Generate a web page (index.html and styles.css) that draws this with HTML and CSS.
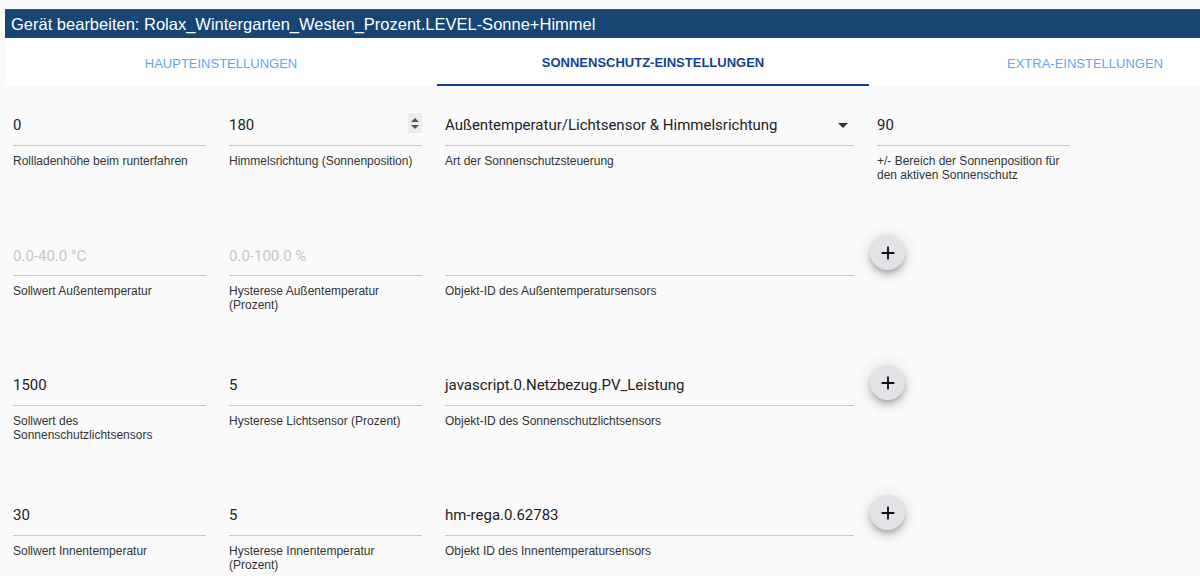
FILE: index.html
```html
<!DOCTYPE html>
<html lang="de">
<head>
<meta charset="utf-8">
<title>Gerät bearbeiten</title>
<link rel="stylesheet" href="styles.css">
</head>
<body>
<div class="dialog">
  <div class="title">Gerät bearbeiten: Rolax_Wintergarten_Westen_Prozent.LEVEL-Sonne+Himmel</div>
  <div class="tabs">
    <div class="tab">HAUPTEINSTELLUNGEN</div>
    <div class="tab active">SONNENSCHUTZ-EINSTELLUNGEN</div>
    <div class="tab">EXTRA-EINSTELLUNGEN</div>
  </div>
  <div class="content">
    <div class="row">
      <div class="field">
        <div class="input">0</div>
        <div class="label">Rollladenhöhe beim runterfahren</div>
      </div>
      <div class="field">
        <div class="input">180<span class="spinner"><span class="up"></span><span class="down"></span></span></div>
        <div class="label">Himmelsrichtung (Sonnenposition)</div>
      </div>
      <div class="field wide">
        <div class="input">Außentemperatur/Lichtsensor &amp; Himmelsrichtung<span class="caret"></span></div>
        <div class="label">Art der Sonnenschutzsteuerung</div>
      </div>
      <div class="field">
        <div class="input">90</div>
        <div class="label">+/- Bereich der Sonnenposition für den aktiven Sonnenschutz</div>
      </div>
    </div>
    <div class="row">
      <div class="field">
        <div class="input placeholder">0.0-40.0 °C</div>
        <div class="label">Sollwert Außentemperatur</div>
      </div>
      <div class="field">
        <div class="input placeholder">0.0-100.0 %</div>
        <div class="label">Hysterese Außentemperatur (Prozent)</div>
      </div>
      <div class="field wide">
        <div class="input"></div>
        <div class="label">Objekt-ID des Außentemperatursensors</div>
      </div>
      <div class="fab-cell"><button class="fab"><svg viewBox="0 0 24 24" width="22" height="22"><path d="M19 13h-6v6h-2v-6H5v-2h6V5h2v6h6v2z" fill="#111"/></svg></button></div>
    </div>
    <div class="row">
      <div class="field">
        <div class="input">1500</div>
        <div class="label">Sollwert des Sonnenschutzlichtsensors</div>
      </div>
      <div class="field">
        <div class="input">5</div>
        <div class="label">Hysterese Lichtsensor (Prozent)</div>
      </div>
      <div class="field wide">
        <div class="input">javascript.0.Netzbezug.PV_Leistung</div>
        <div class="label">Objekt-ID des Sonnenschutzlichtsensors</div>
      </div>
      <div class="fab-cell"><button class="fab"><svg viewBox="0 0 24 24" width="22" height="22"><path d="M19 13h-6v6h-2v-6H5v-2h6V5h2v6h6v2z" fill="#111"/></svg></button></div>
    </div>
    <div class="row">
      <div class="field">
        <div class="input">30</div>
        <div class="label">Sollwert Innentemperatur</div>
      </div>
      <div class="field">
        <div class="input">5</div>
        <div class="label">Hysterese Innentemperatur (Prozent)</div>
      </div>
      <div class="field wide">
        <div class="input">hm-rega.0.62783</div>
        <div class="label">Objekt ID des Innentemperatursensors</div>
      </div>
      <div class="fab-cell"><button class="fab"><svg viewBox="0 0 24 24" width="22" height="22"><path d="M19 13h-6v6h-2v-6H5v-2h6V5h2v6h6v2z" fill="#111"/></svg></button></div>
    </div>
  </div>
</div>
</body>
</html>
```

FILE: styles.css
```css
html, body {
  margin: 0;
  padding: 0;
  background: #fafafa;
  overflow: hidden;
}

.dialog {
  margin: 9px 0 0 5px;
  font-family: "Liberation Sans", Arial, sans-serif;
}

.title {
  height: 29px;
  line-height: 28px;
  background: #174574;
  color: #ffffff;
  font-size: 16.5px;
  padding-left: 6px;
  border-top: 1px solid #2b5788;
  box-sizing: border-box;
  white-space: nowrap;
}

.tabs {
  display: flex;
  background: #ffffff;
  height: 48px;
  overflow: hidden;
}

.tab {
  flex: 0 0 432px;
  box-sizing: border-box;
  text-align: center;
  padding-top: 3px;
  line-height: 45px;
  font-size: 13px;
  color: #5fa8ef;
}

.tab.active {
  color: #163f97;
  font-weight: bold;
  border-bottom: 2px solid #163f97;
  line-height: 43px;
}

.content {
  padding: 23px 0 0 8px;
}

.row {
  display: grid;
  grid-template-columns: repeat(5, 193px);
  column-gap: 23px;
  height: 130px;
  align-items: start;
}

.field {
  display: flex;
  flex-direction: column;
  min-width: 0;
}

.field.wide {
  grid-column: span 2;
}

.input {
  height: 37px;
  box-sizing: border-box;
  padding-top: 6px;
  line-height: 20px;
  font-family: Roboto, "Liberation Sans", sans-serif;
  font-size: 15px;
  color: #222222;
  border-bottom: 1px solid #c8c8c8;
  display: flex;
  align-items: flex-start;
  white-space: nowrap;
}

.input.placeholder {
  color: #c6c6c6;
  padding-top: 7px;
}

.label {
  margin-top: 8px;
  font-size: 12px;
  line-height: 14px;
  color: #333333;
}

.spinner {
  margin-left: auto;
  width: 14px;
  height: 20px;
  margin-top: -2px;
  background: #ececec;
  display: flex;
  flex-direction: column;
  align-items: center;
  justify-content: center;
  gap: 3px;
}

.spinner .up {
  width: 0;
  height: 0;
  border-left: 4px solid transparent;
  border-right: 4px solid transparent;
  border-bottom: 4px solid #555;
}

.spinner .down {
  width: 0;
  height: 0;
  border-left: 4px solid transparent;
  border-right: 4px solid transparent;
  border-top: 4px solid #555;
}

.caret {
  margin-left: auto;
  margin-right: 6px;
  margin-top: 8px;
  width: 0;
  height: 0;
  border-left: 5px solid transparent;
  border-right: 5px solid transparent;
  border-top: 5px solid #333;
}

.fab-cell {
  display: flex;
}

.fab {
  margin: -4px 0 0 -7px;
  width: 35px;
  height: 35px;
  border-radius: 50%;
  border: none;
  padding: 0;
  background: #e2e3e6;
  box-shadow: 0 3px 5px -1px rgba(0,0,0,0.2), 0 6px 10px 0 rgba(0,0,0,0.14), 0 1px 18px 0 rgba(0,0,0,0.12);
  display: flex;
  align-items: center;
  justify-content: center;
}

.fab svg {
  display: block;
}
```
